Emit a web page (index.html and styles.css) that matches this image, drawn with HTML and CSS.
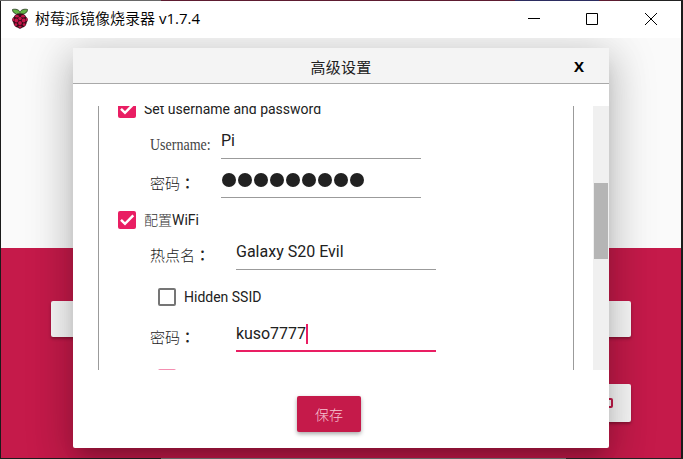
FILE: index.html
```
<!DOCTYPE html>
<html lang="zh-CN">
<head>
<meta charset="utf-8">
<title>树莓派镜像烧录器</title>
<link rel="stylesheet" href="styles.css">
</head>
<body>
<div class="desktop-top"></div>
<div class="window">
  <header class="titlebar">
    <svg class="logo" width="18" height="22" viewBox="0 0 18 22">
      <path d="M9 6C6 6.600 1.500 5.500 1.500 1.500 4.500 .7 8.300 1.500 9 4.500 9.700 1.500 13.500 .7 16.500 1.500 16.500 5.500 12 6.600 9 6Z" fill="#63b345" stroke="#24351d" stroke-width=".8"/>
      <path d="M9 5.500C6 5.300 3.500 6.600 3 8.800 .8 10 .7 13 2.300 14.500 2.500 17.500 5 19.500 7 19.800 8.300 21 9.700 21 11 19.800 13 19.500 15.500 17.500 15.700 14.500 17.300 13 17.200 10 15 8.800 14.500 6.600 12 5.300 9 5.500Z" fill="#3a0d19"/>
      <g fill="#c8154a">
        <ellipse cx="6" cy="8.300" rx="1.900" ry="1.300"/><ellipse cx="12" cy="8.300" rx="1.900" ry="1.300"/>
        <circle cx="9" cy="10.500" r="1.700"/><circle cx="5.300" cy="12.500" r="1.900"/><circle cx="12.700" cy="12.500" r="1.900"/>
        <ellipse cx="2.400" cy="11.500" rx=".8" ry="1.700"/><ellipse cx="15.600" cy="11.500" rx=".8" ry="1.700"/>
        <circle cx="9" cy="15" r="1.900"/><circle cx="4.900" cy="16.600" r="1.400"/><circle cx="13.100" cy="16.600" r="1.400"/><ellipse cx="9" cy="18.700" rx="1.700" ry="1"/>
      </g>
    </svg>
    <span class="app-name"><span class="app-cjk">树莓派镜像烧录器</span> v1.7.4</span>
    <svg class="controls" width="130" height="14" viewBox="0 0 130 14" fill="none" stroke="#000">
      <path d="M0 6.500H12M58.500 1.500h11v11h-11zM117 1l12 12M129 1l-12 12"/>
    </svg>
  </header>
  <main class="body">
    <div class="banner"></div>
    <div class="panel">
      <div class="strip wide"></div>
      <div class="strip write"><svg width="8" height="10" viewBox="0 0 8 10"><rect x="1" y="1" width="6" height="8" rx="1" fill="none" stroke="#c51a4a" stroke-width="2"/></svg></div>
    </div>
    <section class="dialog">
      <header class="dialog-head"><h1>高级设置</h1><b class="close">X</b></header>
      <div class="scroller">
        <div class="options">
          <div class="check-row user-check">
            <svg class="box" width="18" height="18" viewBox="0 0 18 18"><rect width="18" height="18" rx="2" fill="#e91e63"/><path d="M3 8.800l4 4 8.300-8.500" fill="none" stroke="#fff" stroke-width="2.500"/></svg>
            <span>Set username and password</span>
          </div>
          <div class="field-row name-row"><span class="label latin"><span>Username:</span></span><div class="field">Pi</div></div>
          <div class="field-row secret-row"><span class="label">密码<span class="colon" lang="zh-TW">：</span></span><div class="field dots"><i></i><i></i><i></i><i></i><i></i><i></i><i></i><i></i><i></i></div></div>
          <div class="check-row wifi-check">
            <svg class="box" width="18" height="18" viewBox="0 0 18 18"><rect width="18" height="18" rx="2" fill="#e91e63"/><path d="M3 8.800l4 4 8.300-8.500" fill="none" stroke="#fff" stroke-width="2.500"/></svg>
            <span><span class="thin">配置</span>WiFi</span>
          </div>
          <div class="field-row wifi-row"><span class="label">热点名<span class="colon" lang="zh-TW">：</span></span><div class="field">Galaxy S20 Evil</div></div>
          <div class="check-row hidden-check"><span class="box empty"></span><span>Hidden SSID</span></div>
          <div class="field-row wifi-row"><span class="label">密码<span class="colon" lang="zh-TW">：</span></span><div class="field focused">kuso7777<i class="caret"></i></div></div>
          <div class="check-row show-check"><span class="box empty pink"></span></div>
        </div>
        <div class="scrollbar"><div class="thumb"></div></div>
      </div>
      <footer class="dialog-foot"><button class="save">保存</button></footer>
    </section>
  </main>
</div>
<div class="desktop-bottom"></div>
</body>
</html>
```
FILE: styles.css
```
* { box-sizing: border-box; }
body {
  margin: 0;
  width: 683px;
  height: 459px;
  overflow: hidden;
  background: #1b1b1b;
  font-family: Roboto, "Noto Sans CJK SC", sans-serif;
  color: #212121;
}
.desktop-top {
  height: 1px;
  background: linear-gradient(90deg, #696969 161px, #5d1b30 161px 515px, #2b2c60 515px 599px, #5d1b30 599px 620px, #222 620px);
}
.desktop-bottom {
  height: 1px;
  background: linear-gradient(90deg, #1c1c1c 161px, #666 161px 566px, #222 566px);
}
.window { width: 680px; height: 457px; margin-left: 1px; }
.titlebar {
  height: 37px;
  display: flex;
  align-items: center;
  background: #fff;
  padding: 0 23px 0 10px;
}
.logo { margin-top: -1px; }
.app-name {
  margin: -3px 0 0 6px;
  font: 15px/20px "Open Sans", "Noto Sans CJK SC", sans-serif;
  color: #000;
  white-space: nowrap;
}
.app-cjk { font-weight: 350; }
.controls { margin-left: auto; margin-top: -1px; }
.body {
  position: relative;
  height: 420px;
  overflow: hidden;
}
.banner { height: 210px; background: #fafafa; }
.panel { height: 210px; background: #c51a4a; padding: 53px 50px 0; }
.strip {
  height: 36px;
  border-radius: 2px;
  background: #fafafa;
  box-shadow: 0 2px 3px rgba(0, 0, 0, .3);
}
.write {
  display: flex;
  align-items: center;
  justify-content: flex-end;
  height: 38px;
  width: 150px;
  margin: 47px 0 0 auto;
  padding-right: 18px;
}
.dialog {
  position: absolute;
  left: 72px;
  top: 10px;
  width: 536px;
  height: 400px;
  display: flex;
  flex-direction: column;
  background: #fff;
  border-radius: 0 0 2px 2px;
  box-shadow: 0 11px 15px -7px rgba(0, 0, 0, .2), 0 9px 46px 8px rgba(0, 0, 0, .12), 0 12px 38px 3px rgba(0, 0, 0, .14);
}
.dialog-head {
  height: 36px;
  display: grid;
  grid-template-columns: 60px 1fr 60px;
  align-items: center;
  background: #f4f4f4;
  border-bottom: 1px solid #a9a9a9;
}
.dialog-head h1 {
  grid-column: 2;
  margin: 3px 0 0;
  text-align: center;
  font: 15px/20px "Noto Sans CJK SC", sans-serif;
  letter-spacing: .2px;
}
.close { text-align: center; font: bold 15px/20px "Open Sans", sans-serif; color: #000; margin-top: 1px; }
.scroller {
  height: 264px;
  margin: 22px 0 0 25px;
  display: flex;
  justify-content: space-between;
  overflow: hidden;
}
.options { width: 476px; height: 264px; border: solid #9b9b9b; border-width: 0 1px; overflow: hidden; }
.scrollbar { width: 16px; padding: 77px 1px 0; background: #f0f0f0; }
.thumb { height: 76px; background: #b5b5b5; }
.check-row {
  display: flex;
  align-items: center;
  gap: 8px;
  padding-left: 19px;
  font-size: 14px;
  white-space: nowrap;
}
.box { flex: none; width: 18px; height: 18px; }
.empty { border: 2px solid #757575; border-radius: 2px; }
.pink { border-color: #f48fb1; }
.user-check { height: 24px; margin-top: -9px; }
.wifi-check { height: 44px; }
.wifi-check > span { margin-top: -2px; }
.hidden-check { height: 54px; padding-left: 59px; }
.show-check { margin-top: 17px; padding-left: 59px; }
.thin { font-family: "Noto Sans CJK SC", sans-serif; font-weight: 300; color: #333; }
.field-row { display: flex; align-items: flex-end; padding-left: 51px; }
.label {
  width: 86px;
  height: 26px;
  font: 300 15px/22px "Noto Sans CJK SC", sans-serif;
  color: #222;
  white-space: nowrap;
}
.colon { font-family: "Noto Sans CJK TC", sans-serif; font-weight: 500; }
.latin { font: 16px/23px "Liberation Serif", serif; color: #444; }
.latin span { display: inline-block; transform: scaleX(.875); transform-origin: left; }
.name-row .label, .secret-row .label { width: 71px; }
.name-row { height: 38px; }
.secret-row { height: 39px; }
.wifi-row { height: 28px; }
.field {
  display: flex;
  width: 200px;
  height: 28px;
  border-bottom: 1px solid #9b9b9b;
  font-size: 16px;
  line-height: 20px;
  white-space: nowrap;
}
.dots { gap: 2px; padding: 3px 0 0 1px; }
.dots i { width: 14px; height: 14px; border-radius: 50%; background: #212121; }
.focused { border-bottom: 2px solid #e91e63; letter-spacing: -.05px; }
.caret { width: 2px; height: 20px; background: #e91e63; }
.dialog-foot { display: flex; justify-content: center; margin-top: 26px; padding-right: 24px; }
.save {
  width: 64px;
  height: 36px;
  border: 0;
  padding: 0;
  border-radius: 2px;
  background: #c51a4a;
  color: #f6c6d3;
  font: 300 14px/36px "Noto Sans CJK SC", sans-serif;
  box-shadow: 0 2px 4px rgba(0, 0, 0, .35);
}
```
